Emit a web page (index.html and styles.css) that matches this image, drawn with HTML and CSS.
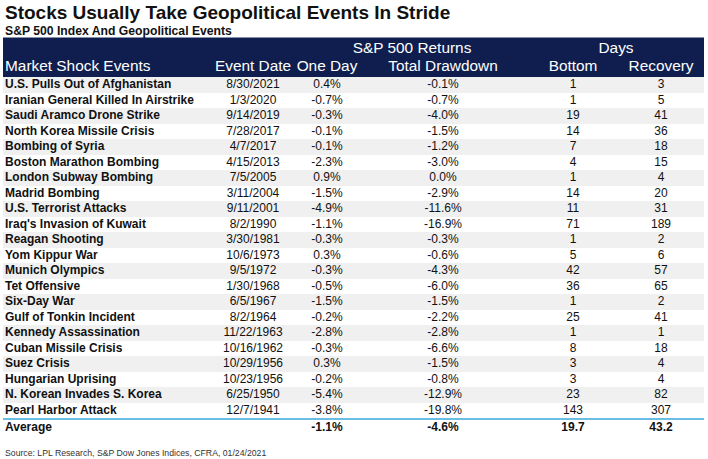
FILE: index.html
```html
<!DOCTYPE html>
<html>
<head>
<meta charset="utf-8">
<link rel="stylesheet" href="styles.css">
</head>
<body>
<div class="page">
  <h1 class="title">Stocks Usually Take Geopolitical Events In Stride</h1>
  <div class="subtitle">S&amp;P 500 Index And Geopolitical Events</div>
  <table class="tbl">
    <colgroup>
      <col class="c-name"><col class="c-date"><col class="c-day"><col class="c-draw"><col class="c-bot"><col class="c-rec">
    </colgroup>
    <thead>
      <tr class="h1">
        <th></th><th></th>
        <th colspan="2">S&amp;P 500 Returns</th>
        <th colspan="2">Days</th>
      </tr>
      <tr class="h2">
        <th class="name">Market Shock Events</th>
        <th>Event Date</th>
        <th>One Day</th>
        <th>Total Drawdown</th>
        <th>Bottom</th>
        <th>Recovery</th>
      </tr>
    </thead>
    <tbody>
      <tr><td class="name">U.S. Pulls Out of Afghanistan</td><td>8/30/2021</td><td>0.4%</td><td>-0.1%</td><td>1</td><td>3</td></tr>
      <tr><td class="name">Iranian General Killed In Airstrike</td><td>1/3/2020</td><td>-0.7%</td><td>-0.7%</td><td>1</td><td>5</td></tr>
      <tr><td class="name">Saudi Aramco Drone Strike</td><td>9/14/2019</td><td>-0.3%</td><td>-4.0%</td><td>19</td><td>41</td></tr>
      <tr><td class="name">North Korea Missile Crisis</td><td>7/28/2017</td><td>-0.1%</td><td>-1.5%</td><td>14</td><td>36</td></tr>
      <tr><td class="name">Bombing of Syria</td><td>4/7/2017</td><td>-0.1%</td><td>-1.2%</td><td>7</td><td>18</td></tr>
      <tr><td class="name">Boston Marathon Bombing</td><td>4/15/2013</td><td>-2.3%</td><td>-3.0%</td><td>4</td><td>15</td></tr>
      <tr><td class="name">London Subway Bombing</td><td>7/5/2005</td><td>0.9%</td><td>0.0%</td><td>1</td><td>4</td></tr>
      <tr><td class="name">Madrid Bombing</td><td>3/11/2004</td><td>-1.5%</td><td>-2.9%</td><td>14</td><td>20</td></tr>
      <tr><td class="name">U.S. Terrorist Attacks</td><td>9/11/2001</td><td>-4.9%</td><td>-11.6%</td><td>11</td><td>31</td></tr>
      <tr><td class="name">Iraq's Invasion of Kuwait</td><td>8/2/1990</td><td>-1.1%</td><td>-16.9%</td><td>71</td><td>189</td></tr>
      <tr><td class="name">Reagan Shooting</td><td>3/30/1981</td><td>-0.3%</td><td>-0.3%</td><td>1</td><td>2</td></tr>
      <tr><td class="name">Yom Kippur War</td><td>10/6/1973</td><td>0.3%</td><td>-0.6%</td><td>5</td><td>6</td></tr>
      <tr><td class="name">Munich Olympics</td><td>9/5/1972</td><td>-0.3%</td><td>-4.3%</td><td>42</td><td>57</td></tr>
      <tr><td class="name">Tet Offensive</td><td>1/30/1968</td><td>-0.5%</td><td>-6.0%</td><td>36</td><td>65</td></tr>
      <tr><td class="name">Six-Day War</td><td>6/5/1967</td><td>-1.5%</td><td>-1.5%</td><td>1</td><td>2</td></tr>
      <tr><td class="name">Gulf of Tonkin Incident</td><td>8/2/1964</td><td>-0.2%</td><td>-2.2%</td><td>25</td><td>41</td></tr>
      <tr><td class="name">Kennedy Assassination</td><td>11/22/1963</td><td>-2.8%</td><td>-2.8%</td><td>1</td><td>1</td></tr>
      <tr><td class="name">Cuban Missile Crisis</td><td>10/16/1962</td><td>-0.3%</td><td>-6.6%</td><td>8</td><td>18</td></tr>
      <tr><td class="name">Suez Crisis</td><td>10/29/1956</td><td>0.3%</td><td>-1.5%</td><td>3</td><td>4</td></tr>
      <tr><td class="name">Hungarian Uprising</td><td>10/23/1956</td><td>-0.2%</td><td>-0.8%</td><td>3</td><td>4</td></tr>
      <tr><td class="name">N. Korean Invades S. Korea</td><td>6/25/1950</td><td>-5.4%</td><td>-12.9%</td><td>23</td><td>82</td></tr>
      <tr class="last"><td class="name">Pearl Harbor Attack</td><td>12/7/1941</td><td>-3.8%</td><td>-19.8%</td><td>143</td><td>307</td></tr>
    </tbody>
    <tfoot>
      <tr class="avg"><td class="name">Average</td><td></td><td>-1.1%</td><td>-4.6%</td><td>19.7</td><td>43.2</td></tr>
    </tfoot>
  </table>
  <div class="source">Source: LPL Research, S&amp;P Dow Jones Indices, CFRA, 01/24/2021</div>
</div>
</body>
</html>
```

FILE: styles.css
```css
* { box-sizing: border-box; }
html, body { margin: 0; padding: 0; background: #fff; }
body { font-family: "Liberation Sans", Arial, sans-serif; color: #111; }
.page { width: 708px; height: 459px; padding: 2px 4px 0 3px; }
.title {
  margin: 0;
  font-size: 19px;
  line-height: 22px;
  font-weight: bold;
  padding-left: 2px;
  color: #111;
}
.subtitle {
  font-size: 12.2px;
  line-height: 12px;
  font-weight: bold;
  padding-left: 2px;
  margin-top: 1px;
}
.tbl {
  margin-top: 0;
  width: 701px;
  border-collapse: collapse;
  table-layout: fixed;
}
.c-name { width: 207px; }
.c-date { width: 86px; }
.c-day { width: 62px; }
.c-draw { width: 170px; }
.c-bot { width: 90px; }
.c-rec { width: 86px; }
thead { background: #0f1e4e; color: #fff; }
thead tr.h1 { border-top: 1px solid #8592ad; }
th {
  font-weight: normal;
  font-size: 15.4px;
  text-align: center;
  padding: 0;
  white-space: nowrap;
}
.h1 th { height: 19px; line-height: 19px; vertical-align: middle; }
.h2 th { height: 20px; line-height: 18px; vertical-align: top; }
th.name { text-align: left; padding-left: 2px; }
td {
  font-size: 12px;
  height: 15.5px;
  line-height: 15px;
  padding: 0;
  text-align: center;
  white-space: nowrap;
  color: #111;
}
td.name { text-align: left; padding-left: 2px; font-weight: bold; }
tbody tr:nth-child(odd) { background: #f0f0f0; }
tr.last { border-bottom: 2px solid #6bbde3; }
.avg td { font-weight: bold; height: 16px; line-height: 15px; }
.source {
  margin-top: 13px;
  font-size: 8.7px;
  line-height: 11px;
  padding-left: 2px;
  color: #333;
}
```
